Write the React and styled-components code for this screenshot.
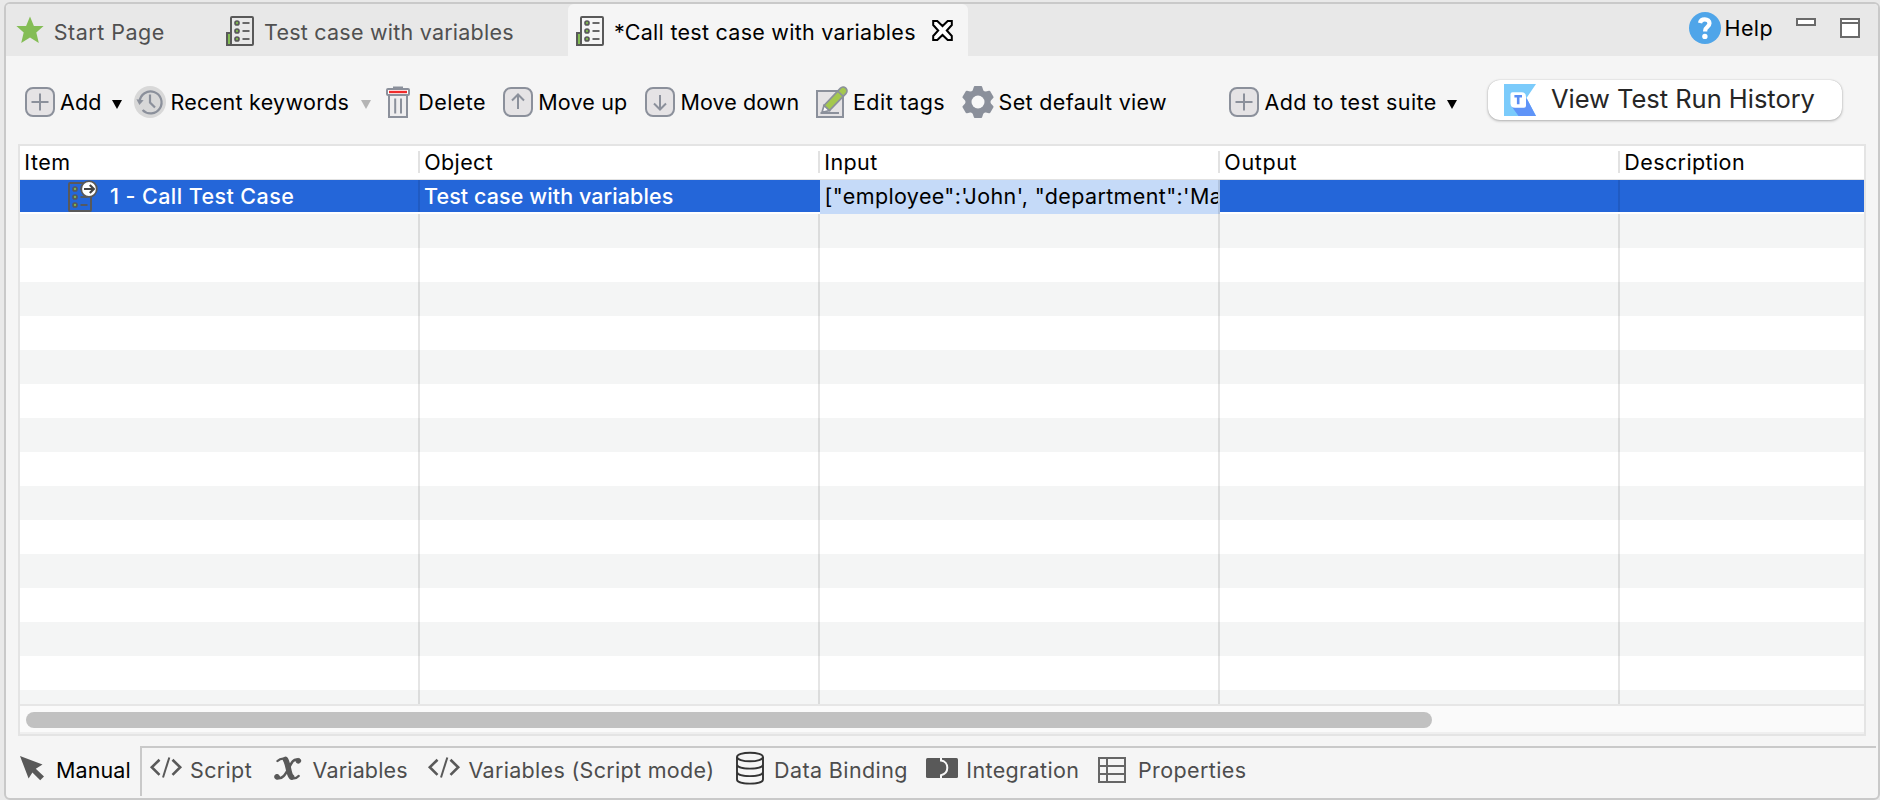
import React from 'react';
import styled, { createGlobalStyle, css } from 'styled-components';

const GREY = '#8b909b';
const DARK = '#595959';

const GlobalStyle = createGlobalStyle`
  body {
    margin: 0;
    background: #ececec;
    font-family: Inter, "Liberation Sans", sans-serif;
    font-size: 21.5px;
    color: #000;
  }
  *, *::before, *::after { box-sizing: border-box; }
  svg { display: block; flex: none; overflow: visible; }
`;

const Page = styled.div`
  width: 1880px;
  height: 800px;
  padding: 2px 0 0 4px;
  background: #e9e9e9;
  overflow: hidden;
`;

const Panel = styled.div`
  height: 798px;
  display: flex;
  flex-direction: column;
  border: 2px solid #c9c9c9;
  border-radius: 6px;
  background: #f5f5f5;
`;

const Label = styled.span`
  flex: none;
  white-space: nowrap;
  letter-spacing: ${(p) => p.$ls || 0}px;
`;

/* Editor tabs */

const TabBar = styled.div`
  flex: none;
  height: 52px;
  display: flex;
  background: #e8e8e8;
  border-radius: 4px 4px 0 0;
`;

const Tab = styled.div`
  flex: none;
  width: ${(p) => p.$width}px;
  display: flex;
  align-items: center;
  gap: ${(p) => p.$gap}px;
  padding: 4px 0 0 ${(p) => p.$pad}px;
  color: #505050;
  ${(p) =>
    p.$active &&
    css`
      background: #f5f5f5;
      border-radius: 6px 6px 0 0;
      color: #000;
    `}
`;

const CloseButton = styled.div`
  margin-left: 6px;
`;

const TabTools = styled.div`
  margin-left: auto;
  height: 48px;
  display: flex;
  align-items: center;
  padding-right: 18px;
`;

const MinimizeIcon = styled.div`
  width: 20px;
  height: 8px;
  margin: 0 24px 12px 23px;
  border: 2px solid #6a6a6a;
  background: #fff;
`;

const MaximizeIcon = styled.div`
  width: 20px;
  height: 20px;
  border: 2px solid #6a6a6a;
  background: linear-gradient(#fff 2px, #6a6a6a 2px, #6a6a6a 4px, #fff 4px);
`;

/* Toolbar */

const Toolbar = styled.div`
  flex: none;
  height: 88px;
  display: flex;
  align-items: flex-start;
  padding: 24px 0 0 19px;
`;

const ToolButton = styled.div`
  flex: none;
  width: ${(p) => p.$width}px;
  height: 44px;
  display: flex;
  align-items: center;
`;

const ToolLabel = styled(Label)`
  margin-left: ${(p) => p.$gap}px;
`;

const Caret = styled.span`
  flex: none;
  margin: 4px 0 0 ${(p) => p.$gap}px;
  border: solid transparent;
  border-width: 9px 5px 0;
  border-top-color: ${(p) => (p.$muted ? '#b4b4b4' : '#000')};
`;

const HistoryButton = styled.div`
  flex: none;
  width: 354px;
  height: 40px;
  display: flex;
  align-items: center;
  gap: 15px;
  padding-left: 16px;
  border-radius: 12px;
  background: #fff;
  color: #262626;
  font-size: 25.5px;
  box-shadow: 0 0 1px rgba(0, 0, 0, 0.25), 0 1px 3px rgba(0, 0, 0, 0.28);
`;

const HistoryLabel = styled(Label)`
  padding-bottom: 3px;
`;

/* Steps table */

const Table = styled.div`
  flex: none;
  width: 1848px;
  height: 592px;
  margin-left: 12px;
  display: flex;
  flex-direction: column;
  border: 2px solid #e4e4e4;
  background: #fff;
`;

const columns = css`
  display: grid;
  grid-template-columns: 400px 400px 400px 400px 244px;
`;

const HeaderRow = styled.div`
  ${columns}
  flex: none;
  height: 34px;
  border-bottom: 1px solid #e2e2e2;
`;

const HeaderCell = styled.div`
  height: 32px;
  display: flex;
  align-items: center;
  justify-content: space-between;
  padding-left: 4.3px;
  &:not(:last-child)::after {
    content: '';
    width: 2px;
    height: 22px;
    background: #e2e2e2;
  }
`;

const Body = styled.div`
  flex: none;
  height: 524px;
  overflow: hidden;
`;

const Row = styled.div`
  ${columns}
  height: 34px;
  background: ${(p) => (p.$striped ? '#f4f5f5' : '#fff')};
`;

const Cell = styled.div`
  &:not(:last-child) {
    border-right: 2px solid rgba(0, 0, 0, 0.1);
  }
`;

const StepCell = styled.div`
  height: 32px;
  display: flex;
  align-items: center;
  gap: 12px;
  padding-left: ${(p) => p.$pad || 4}px;
  background: #2466d9;
  color: #fff;
  font-weight: 500;
  border-right: ${(p) => (p.$line ? '2px solid #205bc3' : 'none')};
`;

const InputCell = styled.div`
  height: 34px;
  display: flex;
  align-items: center;
  padding: 0 0 2px 4.5px;
  overflow: hidden;
  background: #c5daf8;
  border-right: 2px solid #b1c4df;
`;

const ScrollTrack = styled.div`
  flex: none;
  height: 30px;
  padding: 6px;
  border-top: 2px solid #e6e6e6;
  border-bottom: 2px solid #efefef;
  background: #fafafa;
`;

const ScrollThumb = styled.div`
  width: 1406px;
  height: 16px;
  border-radius: 8px;
  background: #c1c1c1;
`;

/* Bottom view tabs */

const ViewBar = styled.div`
  flex: none;
  display: flex;
  height: 50px;
  margin: 10px 2px 0 0;
`;

const ActiveView = styled.div`
  flex: none;
  width: 134px;
  display: flex;
  align-items: center;
  gap: 12px;
  padding: 0 0 2px 14px;
`;

const ViewList = styled.div`
  flex: 1;
  display: flex;
  align-items: center;
  padding: 0 0 4px 8px;
  border-top: 2px solid #c9c9c9;
  border-left: 2px solid #c9c9c9;
`;

const View = styled.div`
  flex: none;
  width: ${(p) => p.$width}px;
  display: flex;
  align-items: center;
  gap: ${(p) => p.$gap}px;
  color: #4d4d4d;
`;

/* Icons */

const StarIcon = () => (
  <svg width="28" height="32" viewBox="0 0 28 32">
    <path fill="#84bd55" d="M14 .6 17.9 10H27.6L20.3 16.6 22.8 27 14 21.4 5.2 27 7.7 16.6.4 10H10.1Z" />
  </svg>
);

const Checklist = () => (
  <g fill="none" stroke={DARK} strokeWidth="2">
    <rect x="5" y="1" width="22" height="28" rx="1" />
    {[7, 15, 23].map((y) => (
      <g key={y}>
        <circle cx="11" cy={y} r="2" fill="#7fb84e" strokeWidth="1.7" />
        <path d={`M16.5 ${y}H23.5`} strokeWidth="1.8" />
      </g>
    ))}
  </g>
);

const TestCaseIcon = () => (
  <svg width="28" height="32" viewBox="0 -1 28 32">
    <g transform="translate(0 -1)">
      <rect x="1" y="17" width="4" height="12" fill="#84bd55" stroke={DARK} strokeWidth="2" />
      <Checklist />
    </g>
  </svg>
);

const CallTestCaseIcon = () => (
  <svg width="30" height="32" viewBox="0 0 30 32">
    <g transform="translate(-4 2)"><Checklist /></g>
    <circle cx="21" cy="9" r="7.8" fill="#fff" stroke={DARK} strokeWidth="1.8" />
    <path d="M16 9H25.5M21.8 5 25.8 9 21.8 13" fill="none" stroke="#444" strokeWidth="2.2" />
  </svg>
);

const CloseIcon = () => (
  <svg width="21" height="24" viewBox="0 0 21 24">
    <path d="M1.2 1H5.3L10.5 6 15.7 1H19.8V5L14.8 10.5 19.8 16V20H15.7L10.5 15 5.3 20H1.2V16L6.2 10.5 1.2 5Z" fill="#fff" stroke="#000" strokeWidth="2" />
  </svg>
);

const HelpIcon = () => (
  <svg width="32" height="32" viewBox="0 0 32 32">
    <circle cx="16" cy="16" r="16" fill="#4fa5e9" />
    <path d="M11 11C11.5 8.4 13.4 7.4 15.8 7.4 18.6 7.4 20.5 8.9 20.5 11.3 20.5 15 16.2 14.6 16.2 18.6V19.6" fill="none" stroke="#fff" strokeWidth="4.2" />
    <circle cx="15.9" cy="24.4" r="2.7" fill="#fff" />
  </svg>
);

const shapes = {
  plus: 'M15 6.5V23.5M6.5 15H23.5',
  up: 'M15 22V8M9 13.5 15 7.5 21 13.5',
  down: 'M15 8V22M9 16.5 15 22.5 21 16.5',
};

const BoxIcon = ({ shape }) => (
  <svg width="30" height="30" viewBox="0 0 30 30">
    <rect x="1" y="1" width="28" height="28" rx="7" fill="#e5e3e5" stroke={GREY} strokeWidth="2" />
    <path d={shapes[shape]} fill="none" stroke={GREY} strokeWidth="2" />
  </svg>
);

const RecentIcon = () => (
  <svg width="32" height="32" viewBox="0 0 32 32">
    <circle cx="16" cy="16" r="16" fill="#d8d8d8" />
    <path d="M5.6 15.5A11 11 0 1 1 8.6 24M16 8.5V16.6L21 21.5" fill="none" stroke={GREY} strokeWidth="2.2" />
    <path d="M2.4 13.2 9.6 14.2 5.4 19Z" fill={GREY} />
  </svg>
);

const TrashIcon = () => (
  <svg width="24" height="32" viewBox="0 0 24 32">
    <path d="M7 3V.5H17V3Z" fill={GREY} />
    <path d="M3 9V31H21V9" fill="#efeeef" stroke={GREY} strokeWidth="2" />
    <rect x="1" y="3" width="22" height="6" rx="1" fill="#fff" stroke={GREY} strokeWidth="2" />
    <path d="M3 6H21" stroke="#f02b2b" strokeWidth="2.4" />
    <path d="M9.2 12.5V27.5M15 12.5V27.5" stroke={GREY} strokeWidth="2" />
  </svg>
);

const EditIcon = () => (
  <svg width="32" height="32" viewBox="0 0 32 32">
    <rect x="1" y="5" width="26" height="26" fill="#e5e3e5" stroke={GREY} strokeWidth="2" />
    <path d="M4.5 27H23" stroke={GREY} strokeWidth="2" />
    <path d="M8 19.5 24.3 2.3A3.7 3.7 0 0 1 29.9 7.6L13.4 24.6Z" fill="#a4c84e" stroke={GREY} strokeWidth="1.7" />
    <path d="M8 19.5 6 26.3 13.4 24.6Z" fill="#fff" stroke={GREY} strokeWidth="1.7" />
    <path d="M21.6 5 27.2 10.4" stroke={GREY} strokeWidth="1.7" />
  </svg>
);

const GearIcon = () => (
  <svg width="32" height="32" viewBox="0 0 32 32" fill={GREY}>
    <circle cx="16" cy="16" r="12.6" />
    {[0, 60, 120, 180, 240, 300].map((a) => (
      <path key={a} d="M9.8 7 11.8 .9Q12 0 12.8 0H19.2Q20 0 20.2 .9L22.2 7Z" transform={`rotate(${a} 16 16)`} />
    ))}
    <circle cx="16" cy="16" r="6.5" fill="#f8f8f8" />
  </svg>
);

const TestOpsLogo = () => (
  <svg width="32" height="32" viewBox="0 0 32 32">
    <path fill="#7bcbfb" d="M0 0H32L22.5 14 32 32H0Z" />
    <path fill="#5f94f8" d="M7 21.5 14.5 32H32L22.5 14 20 20Z" />
    <path fill="#fff" d="M6.5 10.3Q6.5 8.3 8.5 8.3H17.5Q22 8.3 22 12.8V21.7Q22 23.7 20 23.7H11Q6.5 23.7 6.5 19.2Z" />
    <path fill="none" stroke="#5b8df5" strokeWidth="2.6" d="M10.4 12.3H18M14.2 12.3V20.3" />
  </svg>
);

const PointerIcon = () => (
  <svg width="24" height="28" viewBox="0 0 24 28">
    <path fill={DARK} d="M0 0 22.5 8.5 15.8 12.8 24 20.5 20.2 24.3 12.4 16.6 8.6 22.6Z" />
  </svg>
);

const CodeIcon = () => (
  <svg width="32" height="28" viewBox="0 0 32 28" fill="none" stroke={DARK}>
    <path d="M9.5 3.7 1.8 11.3 9.5 18.9M22.5 3.7 30.2 11.3 22.5 18.9" strokeWidth="2.6" />
    <path d="M19.3 1.5 13 21.5" strokeWidth="2" />
  </svg>
);

const VariableIcon = () => (
  <svg width="30" height="28" viewBox="0 0 30 28" fill="none" stroke={DARK} strokeLinecap="round">
    <path d="M12.5 3.5C14 6 14.6 9 15.4 12.5 16.2 16.5 16.8 19.5 18.6 21" strokeWidth="5.6" />
    <path d="M4.5 5C7 2.6 9.5 2.2 12.5 3M18.6 22C21.5 23 24 21.8 25.6 20" strokeWidth="2.4" />
    <path d="M25.5 4C20 2.2 18.2 7.5 15.6 12.5 12.2 18.7 9.5 23.5 4 22" strokeWidth="2.6" />
    <circle cx="25.3" cy="4.8" r="2.4" fill={DARK} />
    <circle cx="4" cy="20.8" r="2.4" fill={DARK} />
  </svg>
);

const DatabaseIcon = () => (
  <svg width="28" height="36" viewBox="0 0 28 36" fill="none" stroke="#333" strokeWidth="1.9">
    <ellipse cx="14" cy="5" rx="13" ry="4.3" />
    <path d="M1 5V27.5C1 33 27 33 27 27.5V5M1 12.5C1 18 27 18 27 12.5M1 20C1 25.5 27 25.5 27 20" />
  </svg>
);

const IntegrationIcon = () => (
  <svg width="32" height="24" viewBox="0 0 32 24">
    <rect width="32" height="20" rx="1.5" fill={DARK} />
    <path d="M15 0V2.6C18.8 3 21.3 6.2 21.3 9.8 21.3 13.4 18.8 16.4 15 17.2V20" fill="none" stroke="#f8f8f8" strokeWidth="2" />
  </svg>
);

const PropertiesIcon = () => (
  <svg width="28" height="26" viewBox="0 0 28 26" fill="none" stroke="#666" strokeWidth="2">
    <path d="M1 1H27V25H1ZM9 1V25M1 9H27M1 17H27" />
  </svg>
);

const views = [
  { label: 'Script', Icon: CodeIcon, width: 123, gap: 8, ls: 0.35 },
  { label: 'Variables', Icon: VariableIcon, width: 155, gap: 9.5, ls: 0.17 },
  { label: 'Variables (Script mode)', Icon: CodeIcon, width: 308, gap: 8.5, ls: 0.31 },
  { label: 'Data Binding', Icon: DatabaseIcon, width: 190, gap: 10, ls: 0.4 },
  { label: 'Integration', Icon: IntegrationIcon, width: 172, gap: 8.3, ls: 0.36 },
  { label: 'Properties', Icon: PropertiesIcon, width: 160, gap: 12, ls: 0.39 },
];

const tools = [
  { label: 'Add', icon: <BoxIcon shape="plus" />, width: 109, gap: 5, ls: 0.15, caret: 10.5 },
  { label: 'Recent keywords', icon: <RecentIcon />, width: 252, gap: 4.5, ls: 0.28, caret: 11.5, muted: true },
  { label: 'Delete', icon: <TrashIcon />, width: 117, gap: 8.2, ls: 0.45 },
  { label: 'Move up', icon: <BoxIcon shape="up" />, width: 142, gap: 5.2, ls: 0.18 },
  { label: 'Move down', icon: <BoxIcon shape="down" />, width: 171, gap: 5.5, ls: 0.08 },
  { label: 'Edit tags', icon: <EditIcon />, width: 146, gap: 5, ls: 0.45 },
  { label: 'Set default view', icon: <GearIcon />, width: 267, gap: 4.6, ls: 0.33 },
  { label: 'Add to test suite', icon: <BoxIcon shape="plus" />, width: 259, gap: 5.5, ls: 0.4, caret: 10.5 },
];

const headers = [
  ['Item', 0.5],
  ['Object', 0.36],
  ['Input', 0.37],
  ['Output', 0.65],
  ['Description', 0.4],
];

export default function App() {
  return (
    <Page>
      <GlobalStyle />
      <Panel>
        <TabBar>
          <Tab $width={220} $pad={10} $gap={9.8}>
            <StarIcon />
            <Label $ls={0.49}>Start Page</Label>
          </Tab>
          <Tab $width={342} $pad={0} $gap={10}>
            <TestCaseIcon />
            <Label $ls={0.23}>Test case with variables</Label>
          </Tab>
          <Tab $active $width={400} $pad={8} $gap={10}>
            <TestCaseIcon />
            <Label $ls={0.27}>*Call test case with variables</Label>
            <CloseButton><CloseIcon /></CloseButton>
          </Tab>
          <TabTools>
            <HelpIcon />
            <ToolLabel $gap={3.5} $ls={0.4}>Help</ToolLabel>
            <MinimizeIcon />
            <MaximizeIcon />
          </TabTools>
        </TabBar>

        <Toolbar>
          {tools.map((t) => (
            <ToolButton key={t.label} $width={t.width}>
              {t.icon}
              <ToolLabel $gap={t.gap} $ls={t.ls}>{t.label}</ToolLabel>
              {t.caret && <Caret $gap={t.caret} $muted={t.muted} />}
            </ToolButton>
          ))}
          <HistoryButton>
            <TestOpsLogo />
            <HistoryLabel $ls={-0.03}>View Test Run History</HistoryLabel>
          </HistoryButton>
        </Toolbar>

        <Table>
          <HeaderRow>
            {headers.map(([name, ls]) => (
              <HeaderCell key={name}><Label $ls={ls}>{name}</Label></HeaderCell>
            ))}
          </HeaderRow>
          <Body>
            <Row>
              <StepCell $pad={48} $line>
                <CallTestCaseIcon />
                <Label $ls={0.42}>1 - Call Test Case</Label>
              </StepCell>
              <StepCell><Label $ls={0.09}>Test case with variables</Label></StepCell>
              <InputCell><Label $ls={0.37}>{`["employee":'John', "department":'Ma`}</Label></InputCell>
              <StepCell $line />
              <StepCell />
            </Row>
            {Array.from({ length: 15 }, (_, i) => (
              <Row key={i} $striped={i % 2 === 0}>
                {headers.map(([name]) => <Cell key={name} />)}
              </Row>
            ))}
          </Body>
          <ScrollTrack><ScrollThumb /></ScrollTrack>
        </Table>

        <ViewBar>
          <ActiveView>
            <PointerIcon />
            <Label $ls={0.1}>Manual</Label>
          </ActiveView>
          <ViewList>
            {views.map(({ label, Icon, width, gap, ls }) => (
              <View key={label} $width={width} $gap={gap}>
                <Icon />
                <Label $ls={ls}>{label}</Label>
              </View>
            ))}
          </ViewList>
        </ViewBar>
      </Panel>
    </Page>
  );
}
